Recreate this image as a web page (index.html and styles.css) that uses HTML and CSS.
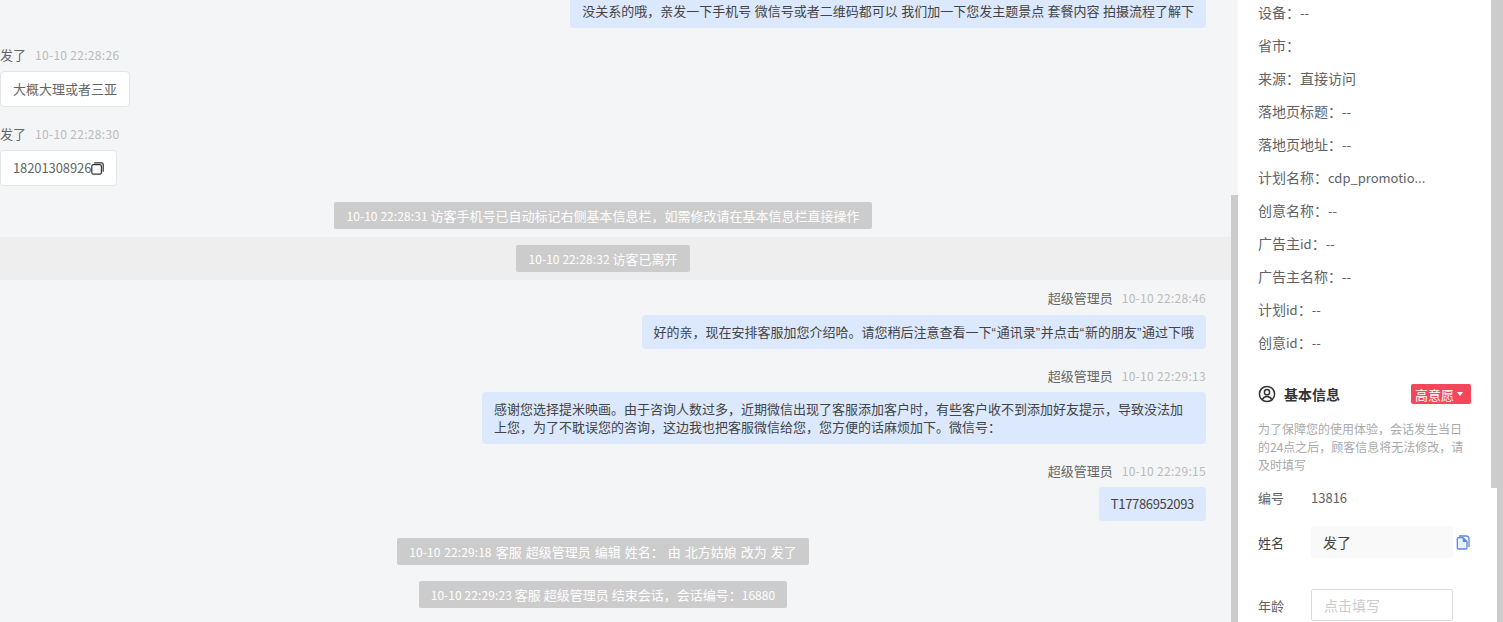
FILE: index.html
```html
<!DOCTYPE html>
<html lang="zh-CN">
<head>
  <meta charset="UTF-8" />
  <title>会话详情</title>
  <link rel="stylesheet" href="styles.css">
</head>
<body>
  <div class="page">
    <div class="chat">
      <div class="chat-list">
        <div class="msg msg-right first">
          <div class="bubble bubble-spaced">没关系的哦，亲发一下手机号 微信号或者二维码都可以 我们加一下您发主题景点 套餐内容 拍摄流程了解下</div>
        </div>

        <div class="msg gap-a">
          <div class="meta"><span class="name">发了</span><span class="time">10-10 22:28:26</span></div>
          <div class="bubble bubble-white">大概大理或者三亚</div>
        </div>

        <div class="msg gap-b">
          <div class="meta"><span class="name">发了</span><span class="time">10-10 22:28:30</span></div>
          <div class="bubble bubble-white phone">18201308926<svg class="copy" viewBox="0 0 13 13" width="13" height="13" fill="none" stroke="#333" stroke-width="1.2"><rect x="0.8" y="2.6" width="9.6" height="9.6" rx="1.6"/><path d="M3.2 0.8h7.4a1.6 1.6 0 0 1 1.6 1.6v7.4"/></svg></div>
        </div>

        <div class="note-row note-1"><span class="note"><span class="num">10-10 22:28:31</span> 访客手机号已自动标记右侧基本信息栏，如需修改请在基本信息栏直接操作</span></div>
        <div class="note-row note-hl"><span class="note"><span class="num">10-10 22:28:32</span> 访客已离开</span></div>

        <div class="msg msg-right gap-c">
          <div class="meta"><span class="name">超级管理员</span><span class="time">10-10 22:28:46</span></div>
          <div class="bubble">好的亲，现在安排客服加您介绍哈。请您稍后注意查看一下<span class="q">“</span>通讯录<span class="q">”</span>并点击<span class="q">“</span>新的朋友<span class="q">”</span>通过下哦</div>
        </div>

        <div class="msg msg-right gap-b">
          <div class="meta"><span class="name">超级管理员</span><span class="time">10-10 22:29:13</span></div>
          <div class="bubble">感谢您选择提米映画。由于咨询人数过多，近期微信出现了客服添加客户时，有些客户收不到添加好友提示，导致没法加上您，为了不耽误您的咨询，这边我也把客服微信给您，您方便的话麻烦加下。微信号：</div>
        </div>

        <div class="msg msg-right gap-b">
          <div class="meta"><span class="name">超级管理员</span><span class="time">10-10 22:29:15</span></div>
          <div class="bubble bubble-code">T17786952093</div>
        </div>

        <div class="note-row note-3"><span class="note"><span class="num">10-10 22:29:18</span> 客服 超级管理员 编辑 姓名： 由 北方姑娘 改为 发了</span></div>
        <div class="note-row note-4"><span class="note"><span class="num">10-10 22:29:23</span> 客服 超级管理员 结束会话，会话编号：<span class="num">16880</span></span></div>
      </div>
    </div>
    <div class="bar bar-chat"><div class="thumb"></div></div>

    <div class="side">
      <div class="side-inner">
        <div class="info-list">
          <div class="info">设备：<span class="latin">--</span></div>
          <div class="info">省市：</div>
          <div class="info">来源：直接访问</div>
          <div class="info">落地页标题：<span class="latin">--</span></div>
          <div class="info">落地页地址：<span class="latin">--</span></div>
          <div class="info">计划名称：<span class="latin">cdp_promotio...</span></div>
          <div class="info">创意名称：<span class="latin">--</span></div>
          <div class="info">广告主<span class="latin">id</span>：<span class="latin">--</span></div>
          <div class="info">广告主名称：<span class="latin">--</span></div>
          <div class="info">计划<span class="latin">id</span>：<span class="latin">--</span></div>
          <div class="info">创意<span class="latin">id</span>：<span class="latin">--</span></div>
        </div>

        <div class="side-head">
          <div class="side-title">
            <svg viewBox="0 0 18 18" width="18" height="18" fill="none" stroke="#333" stroke-width="1.5"><circle cx="9" cy="9" r="7.6"/><circle cx="9" cy="7.2" r="2.6"/><path d="M4.4 14.4c.9-2 2.6-3 4.6-3s3.700 1 4.600 3"/></svg>
            <span>基本信息</span>
          </div>
          <div class="tag">高意愿<i class="caret"></i></div>
        </div>

        <p class="hint">为了保障您的使用体验，会话发生当日的24点之后，顾客信息将无法修改，请及时填写</p>

        <div class="field field-id"><label>编号</label><span>13816</span></div>
        <div class="field field-name">
          <label>姓名</label>
          <div class="input input-filled">发了</div>
          <svg class="doc" viewBox="0 0 14 15" width="14" height="15" fill="none" stroke="#5b86e5" stroke-width="1.3"><path d="M3 1h7.500a2.500 2.500 0 0 1 2.500 2.500V12"/><path d="M1.300 4a1.300 1.300 0 0 1 1.300-1.300H7L11 6.500v6.200a1.300 1.300 0 0 1-1.300 1.300H2.600a1.300 1.300 0 0 1-1.300-1.300z" fill="#eaf0fd"/><path d="M6.800 2.700l4.200 4.200H6.800z" fill="#5b86e5" stroke="none"/></svg>
        </div>
        <div class="field field-age">
          <label>年龄</label>
          <div class="input input-empty">点击填写</div>
        </div>
      </div>
    </div>
    <div class="bar bar-side"><div class="thumb"></div></div>
    <div class="bar bar-page"></div>
  </div>
</body>
</html>
```

FILE: styles.css
```css
html, body {
  margin: 0;
  padding: 0;
  height: 100%;
  overflow: hidden;
}
body {
  font-family: "Noto Sans CJK SC", "Noto Sans", sans-serif;
  font-size: 13px;
  color: #606266;
  background: #fff;
}
.page {
  display: flex;
  height: 622px;
  overflow: hidden;
}

/* chat column */
.chat {
  width: 1231px;
  flex: none;
  height: 100%;
  overflow: hidden;
  background: #f4f5f7;
}
.chat-list {
  display: flex;
  flex-direction: column;
  margin-top: -6px;
}
.msg {
  display: flex;
  flex-direction: column;
  align-items: flex-start;
}
.msg-right {
  align-items: flex-end;
  padding-right: 25px;
}
.first { margin-top: 0; }
.gap-a { margin-top: 17px; }
.gap-b { margin-top: 17px; }
.gap-c { margin-top: 8px; }
.meta {
  display: flex;
  align-items: center;
  gap: 9px;
  height: 20px;
  line-height: 20px;
  margin-bottom: 6px;
}
.gap-c .meta { margin-bottom: 7px; }
.name {
  color: #666;
}
.time {
  color: #bbb;
  font-size: 12px;
  letter-spacing: 0.3px;
}
.bubble {
  box-sizing: border-box;
  max-width: 724px;
  padding: 8px 12px;
  line-height: 18px;
  color: #444;
  background: #dbe8fd;
  border-radius: 4px;
}
.bubble-spaced {
  word-spacing: 0.5px;
}
.bubble-code {
  letter-spacing: -0.33px;
}
.q {
  font-family: "Liberation Sans", sans-serif;
  line-height: 1;
  letter-spacing: 0.75px;
}
.bubble-white {
  display: flex;
  align-items: center;
  height: 36px;
  color: #666;
  background: #fff;
  border: 1px solid #e4e4e4;
}
.phone {
  letter-spacing: -0.1px;
}
.copy {
  flex: none;
}
.note-row {
  display: flex;
  justify-content: center;
  padding-right: 25px;
}
.note {
  height: 27px;
  line-height: 27px;
  padding: 0 12px;
  color: #fff;
  background: #ccc;
  border-radius: 2px;
  white-space: nowrap;
}
.num {
  font-size: 12px;
  letter-spacing: 0.08px;
}
.note-1 { margin-top: 16px; }
.note-hl {
  margin-top: 8px;
  padding-top: 8px;
  padding-bottom: 8px;
  background: #eeeeef;
}
.note-3 { margin-top: 17px; word-spacing: 1.1px; }
.note-4 { margin-top: 16px; }

/* scrollbars */
.bar {
  flex: none;
  height: 100%;
  width: 7px;
}
.bar-chat {
  background: #f4f5f7;
}
.bar-chat .thumb {
  height: 427px;
  margin-top: 195px;
  background: #ccc;
}
.bar-side {
  width: 6px;
  background: #fff;
}
.bar-side .thumb {
  height: 488px;
  background: #ccc;
}
.bar-page {
  width: 6px;
  background: #ccc;
}

/* right panel */
.side {
  width: 253px;
  flex: none;
  height: 100%;
  overflow: hidden;
  background: #fff;
}
.side-inner {
  padding: 0 20px;
  margin-top: -4px;
}
.info {
  height: 33px;
  line-height: 33px;
  font-size: 14px;
  white-space: nowrap;
}
.latin {
  font-size: 13px;
}
.side-head {
  display: flex;
  align-items: center;
  justify-content: space-between;
  margin-top: 24px;
  height: 22px;
}
.side-title {
  display: flex;
  align-items: center;
  gap: 8px;
  font-size: 14px;
  font-weight: 700;
  color: #333;
}
.tag {
  display: flex;
  align-items: center;
  box-sizing: border-box;
  width: 60px;
  height: 20px;
  padding-left: 4px;
  color: #fff;
  background: #f5475c;
  border-radius: 2px;
}
.caret {
  width: 0;
  height: 0;
  margin-left: 3px;
  border: 3px solid transparent;
  border-top: 4px solid #fff;
  border-bottom: 0;
}
.hint {
  margin: 15px 0 0;
  font-size: 12px;
  line-height: 18px;
  color: #aaa;
}
.field {
  display: flex;
  align-items: center;
}
.field label {
  width: 53px;
  flex: none;
}
.field-id { margin-top: 13px; height: 20px; }
.field-name { margin-top: 19px; height: 32px; color: #444; }
.field-age { margin-top: 31px; height: 32px; }
.input {
  box-sizing: border-box;
  width: 142px;
  height: 32px;
  line-height: 30px;
  padding: 0 12px;
  font-size: 14px;
  border-radius: 2px;
}
.input-filled {
  background: #f9f9f9;
  line-height: 32px;
}
.input-empty {
  border: 1px solid #dcdcdc;
  color: #ccc;
}
.doc {
  margin-left: 3px;
  flex: none;
}
```
